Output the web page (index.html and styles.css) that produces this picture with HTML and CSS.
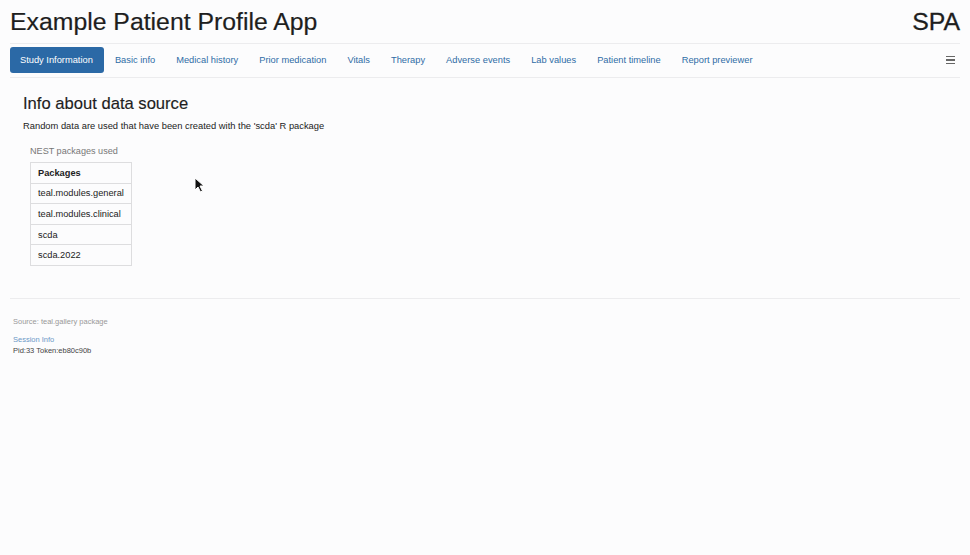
FILE: index.html
```html
<!DOCTYPE html>
<html>
<head>
<meta charset="utf-8">
<link rel="stylesheet" href="styles.css">
</head>
<body>
<div class="page">
  <header class="titlebar">
    <h1 class="title">Example Patient Profile App</h1>
    <div class="brand">SPA</div>
  </header>
  <nav class="tabs">
    <a class="tab active">Study Information</a>
    <a class="tab">Basic info</a>
    <a class="tab">Medical history</a>
    <a class="tab">Prior medication</a>
    <a class="tab">Vitals</a>
    <a class="tab">Therapy</a>
    <a class="tab">Adverse events</a>
    <a class="tab">Lab values</a>
    <a class="tab">Patient timeline</a>
    <a class="tab">Report previewer</a>
    <span class="spacer"></span>
    <span class="burger"><i></i><i></i><i></i></span>
  </nav>
  <main class="content">
    <h2 class="section-title">Info about data source</h2>
    <p class="lead">Random data are used that have been created with the 'scda' R package</p>
    <div class="table-wrap">
      <div class="caption">NEST packages used</div>
      <table class="pkg">
        <thead><tr><th>Packages</th></tr></thead>
        <tbody>
          <tr><td>teal.modules.general</td></tr>
          <tr><td>teal.modules.clinical</td></tr>
          <tr><td>scda</td></tr>
          <tr><td>scda.2022</td></tr>
        </tbody>
      </table>
    </div>
  </main>
  <footer class="footer">
    <div class="source">Source: teal.gallery package</div>
    <a class="session">Session Info</a>
    <div class="pid">Pid:33 Token:eb80c90b</div>
  </footer>
</div>
<svg class="cursor" width="12" height="18" viewBox="0 0 12 18"><path d="M1 1 L1 13 L4 10 L6.5 15 L8.5 14 L6 9 L10 9 Z" fill="#111" stroke="#fff" stroke-width="1"/></svg>
</body>
</html>
```
FILE: styles.css
```css
html, body {
  margin: 0;
  padding: 0;
  background: #fcfcfd;
  font-family: "Liberation Sans", Arial, sans-serif;
  color: #222;
}
.page {
  padding: 0 10px;
}
.titlebar {
  display: flex;
  justify-content: space-between;
  align-items: center;
  height: 44px;
  border-bottom: 1px solid #ececee;
  box-sizing: border-box;
}
.title {
  margin: 0;
  font-size: 24.8px;
  font-weight: normal;
  color: #1e1e1e;
  -webkit-text-stroke: 0.2px #1e1e1e;
}
.brand {
  font-size: 24.8px;
  color: #1e1e1e;
  -webkit-text-stroke: 0.3px #1e1e1e;
}
.tabs {
  display: flex;
  align-items: center;
  padding: 3px 0 4px;
  border-bottom: 1px solid #ececee;
}
.tab {
  font-size: 9.3px;
  color: #2f6ca6;
  padding: 7px 10px;
  margin-right: 1px;
  border-radius: 3px;
  line-height: 12px;
}
.tab.active {
  background: #2b69a6;
  color: #fff;
  padding: 7px 11px 7px 10px;
  margin-right: 1px;
}
.spacer { flex: 1; }
.burger {
  display: flex;
  flex-direction: column;
  gap: 2px;
  margin-right: 5px;
}
.burger i {
  display: block;
  width: 9px;
  height: 1.3px;
  background: #666;
}
.content {
  padding: 0 13px;
}
.section-title {
  margin: 16px 0 0;
  font-size: 16.6px;
  font-weight: normal;
  color: #1e1e1e;
  -webkit-text-stroke: 0.15px #1e1e1e;
}
.lead {
  margin: 7px 0 0;
  font-size: 9.35px;
  color: #222;
}
.table-wrap {
  margin: 15px 0 0 7px;
}
.caption {
  font-size: 9.1px;
  color: #777;
  margin-bottom: 6px;
}
.pkg {
  border-collapse: collapse;
  font-size: 9.25px;
}
.pkg th, .pkg td {
  border: 1px solid #dddddf;
  padding: 0 7px;
  height: 19.6px;
  text-align: left;
  color: #222;
}
.pkg th { font-weight: bold; }
.footer {
  margin-top: 32px;
  border-top: 1px solid #ececee;
  padding: 18px 3px 0;
}
.source {
  font-size: 7.5px;
  color: #999;
}
.session {
  display: block;
  margin-top: 9px;
  font-size: 7.5px;
  color: #6b98c7;
}
.pid {
  font-size: 7.5px;
  color: #444;
  margin-top: 2px;
}
.cursor {
  position: absolute;
  left: 194px;
  top: 177px;
}
```
